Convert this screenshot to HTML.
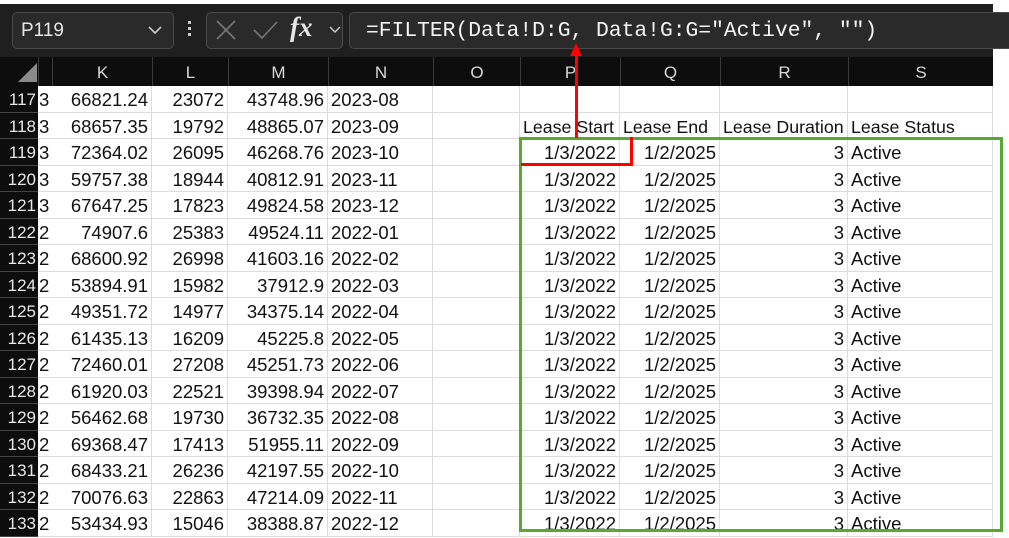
<!DOCTYPE html><html><head><style>
body{margin:0;width:1009px;height:534px;overflow:hidden;background:#fff;position:relative;font-family:"Liberation Sans",sans-serif}
.a{position:absolute}
.top{left:0;top:4px;width:993px;height:53px;background:#1f1f1f}
.hdr{left:0;top:57px;width:993px;height:29px;background:#0d0d0d}
.box{position:absolute;background:#2a2a2a;border:1.5px solid #4a4a4a;border-radius:5px;box-sizing:border-box}
.ch{position:absolute;top:57px;height:29px;line-height:31px;text-align:center;color:#d8d8d8;font-size:17px;border-left:1px solid #3a3a3a;box-sizing:border-box}
.rh{position:absolute;left:0;width:38px;background:#0d0d0d;color:#e8e8e8;font-size:17px;text-align:right;box-sizing:border-box;padding-right:2px;border-bottom:1px solid #444}
.c{position:absolute;font-size:18.5px;color:#111;white-space:nowrap;box-sizing:border-box;height:26.5px;line-height:28px;padding:0 3px;overflow:hidden;border-right:1px solid #dcdcdc;border-bottom:1px solid #dcdcdc}
.r{text-align:right}
</style></head><body>
<div class="a top"></div>
<div class="a hdr"></div>
<div class="box" style="left:12px;top:12px;width:162px;height:37px"></div>
<div class="a" style="left:21px;top:20px;color:#e6e6e6;font-size:19px">P119</div>
<svg class="a" style="left:148px;top:25px" width="14" height="10"><path d="M1 2 L7 8 L13 2" stroke="#ccc" stroke-width="1.6" fill="none"/></svg>
<div class="a" style="left:188px;top:21px;width:4px">
<div style="width:3px;height:3px;background:#ccc;margin-bottom:3px"></div><div style="width:3px;height:3px;background:#ccc;margin-bottom:3px"></div><div style="width:3px;height:3px;background:#ccc"></div></div>
<div class="box" style="left:206px;top:12px;width:137px;height:37px"></div>
<svg class="a" style="left:206px;top:12px" width="137" height="37"><path d="M11 9 L29 27 M29 9 L11 27" stroke="#777" stroke-width="1.6"/><path d="M48 18 L56 26 L71 10" stroke="#777" stroke-width="1.6" fill="none"/><path d="M124 15 L129 20 L134 15" stroke="#ccc" stroke-width="1.4" fill="none"/></svg>
<div class="a" style="left:290px;top:12px;color:#e6e6e6;font-size:27px;font-style:italic;font-weight:bold;font-family:'Liberation Serif',serif">fx</div>
<div class="box" style="left:349px;top:12px;width:660px;height:37px;border-right:none;border-radius:5px 0 0 5px"></div>
<div class="a" style="left:366px;top:19px;color:#f4f4f4;font-size:21.3px;font-family:'Liberation Mono',monospace">=FILTER(Data!D:G, Data!G:G="Active", "")</div>
<div class="a" style="left:38px;top:57px;width:955px;height:29px;background:#0d0d0d"></div>
<svg class="a" style="left:18px;top:62px" width="20" height="20"><path d="M0 20 L19 20 L19 1 Z" fill="#8a8a8a"/></svg>
<div id="g"></div>
<div class="a" style="left:519px;top:137px;width:484px;height:395px;border:3px solid #5aa834;box-sizing:border-box"></div>
<div class="a" style="left:574.5px;top:55px;width:3px;height:83px;background:#f00"></div>
<svg class="a" style="left:569px;top:43px" width="14" height="14"><path d="M7 0 L13 13 L1 13 Z" fill="#f00"/></svg>
<div class="a" style="left:630px;top:137px;width:3px;height:28px;background:#f00"></div>
<div class="a" style="left:521px;top:163px;width:112px;height:3px;background:#f00"></div>
<script>
var cols=[["K",52,100],["L",152,76],["M",228,100],["N",328,105],["O",433,87],["P",520,100],["Q",620,100],["R",720,128],["S",848,145]];
var h='';
h+='<div class="ch" style="left:38px;width:14px"></div>';
cols.forEach(function(c){h+='<div class="ch" style="left:'+c[1]+'px;width:'+c[2]+'px">'+c[0]+'</div>';});
var d=[[3,"66821.24","23072","43748.96","2023-08"],[3,"68657.35","19792","48865.07","2023-09"],[3,"72364.02","26095","46268.76","2023-10"],[3,"59757.38","18944","40812.91","2023-11"],[3,"67647.25","17823","49824.58","2023-12"],[2,"74907.6","25383","49524.11","2022-01"],[2,"68600.92","26998","41603.16","2022-02"],[2,"53894.91","15982","37912.9","2022-03"],[2,"49351.72","14977","34375.14","2022-04"],[2,"61435.13","16209","45225.8","2022-05"],[2,"72460.01","27208","45251.73","2022-06"],[2,"61920.03","22521","39398.94","2022-07"],[2,"56462.68","19730","36732.35","2022-08"],[2,"69368.47","17413","51955.11","2022-09"],[2,"68433.21","26236","42197.55","2022-10"],[2,"70076.63","22863","47214.09","2022-11"],[2,"53434.93","15046","38388.87","2022-12"]];
for(var i=0;i<17;i++){var y=86+i*26.5;var r=d[i];
h+='<div class="rh" style="top:'+y+'px;height:26.5px;line-height:28px">'+(117+i)+'</div>';
h+='<div class="c" style="left:38px;top:'+y+'px;width:14px;padding:0 0 0 1px;border-right:none">'+r[0]+'</div>';
h+='<div class="c r" style="left:52px;top:'+y+'px;width:100px">'+r[1]+'</div>';
h+='<div class="c r" style="left:152px;top:'+y+'px;width:76px">'+r[2]+'</div>';
h+='<div class="c r" style="left:228px;top:'+y+'px;width:100px">'+r[3]+'</div>';
h+='<div class="c" style="left:328px;top:'+y+'px;width:105px">'+r[4]+'</div>';
h+='<div class="c" style="left:433px;top:'+y+'px;width:87px"></div>';
var p='',q='',rr='',s='';
if(i==1){p='Lease Start';q='Lease End';rr='Lease Duration';s='Lease Status';}
else if(i>=2){p='1/3/2022';q='1/2/2025';rr='3';s='Active';}
var al=i==1?'':' r';
var fs=i==1?'font-size:17.8px;':'';
h+='<div class="c'+al+'" style="'+fs+'left:520px;top:'+y+'px;width:100px">'+p+'</div>';
h+='<div class="c'+al+'" style="'+fs+'left:620px;top:'+y+'px;width:100px">'+q+'</div>';
h+='<div class="c'+al+'" style="'+fs+'left:720px;top:'+y+'px;width:128px">'+rr+'</div>';
h+='<div class="c" style="'+fs+'left:848px;top:'+y+'px;width:145px">'+s+'</div>';}
document.getElementById('g').innerHTML=h;
</script>
</body></html>
